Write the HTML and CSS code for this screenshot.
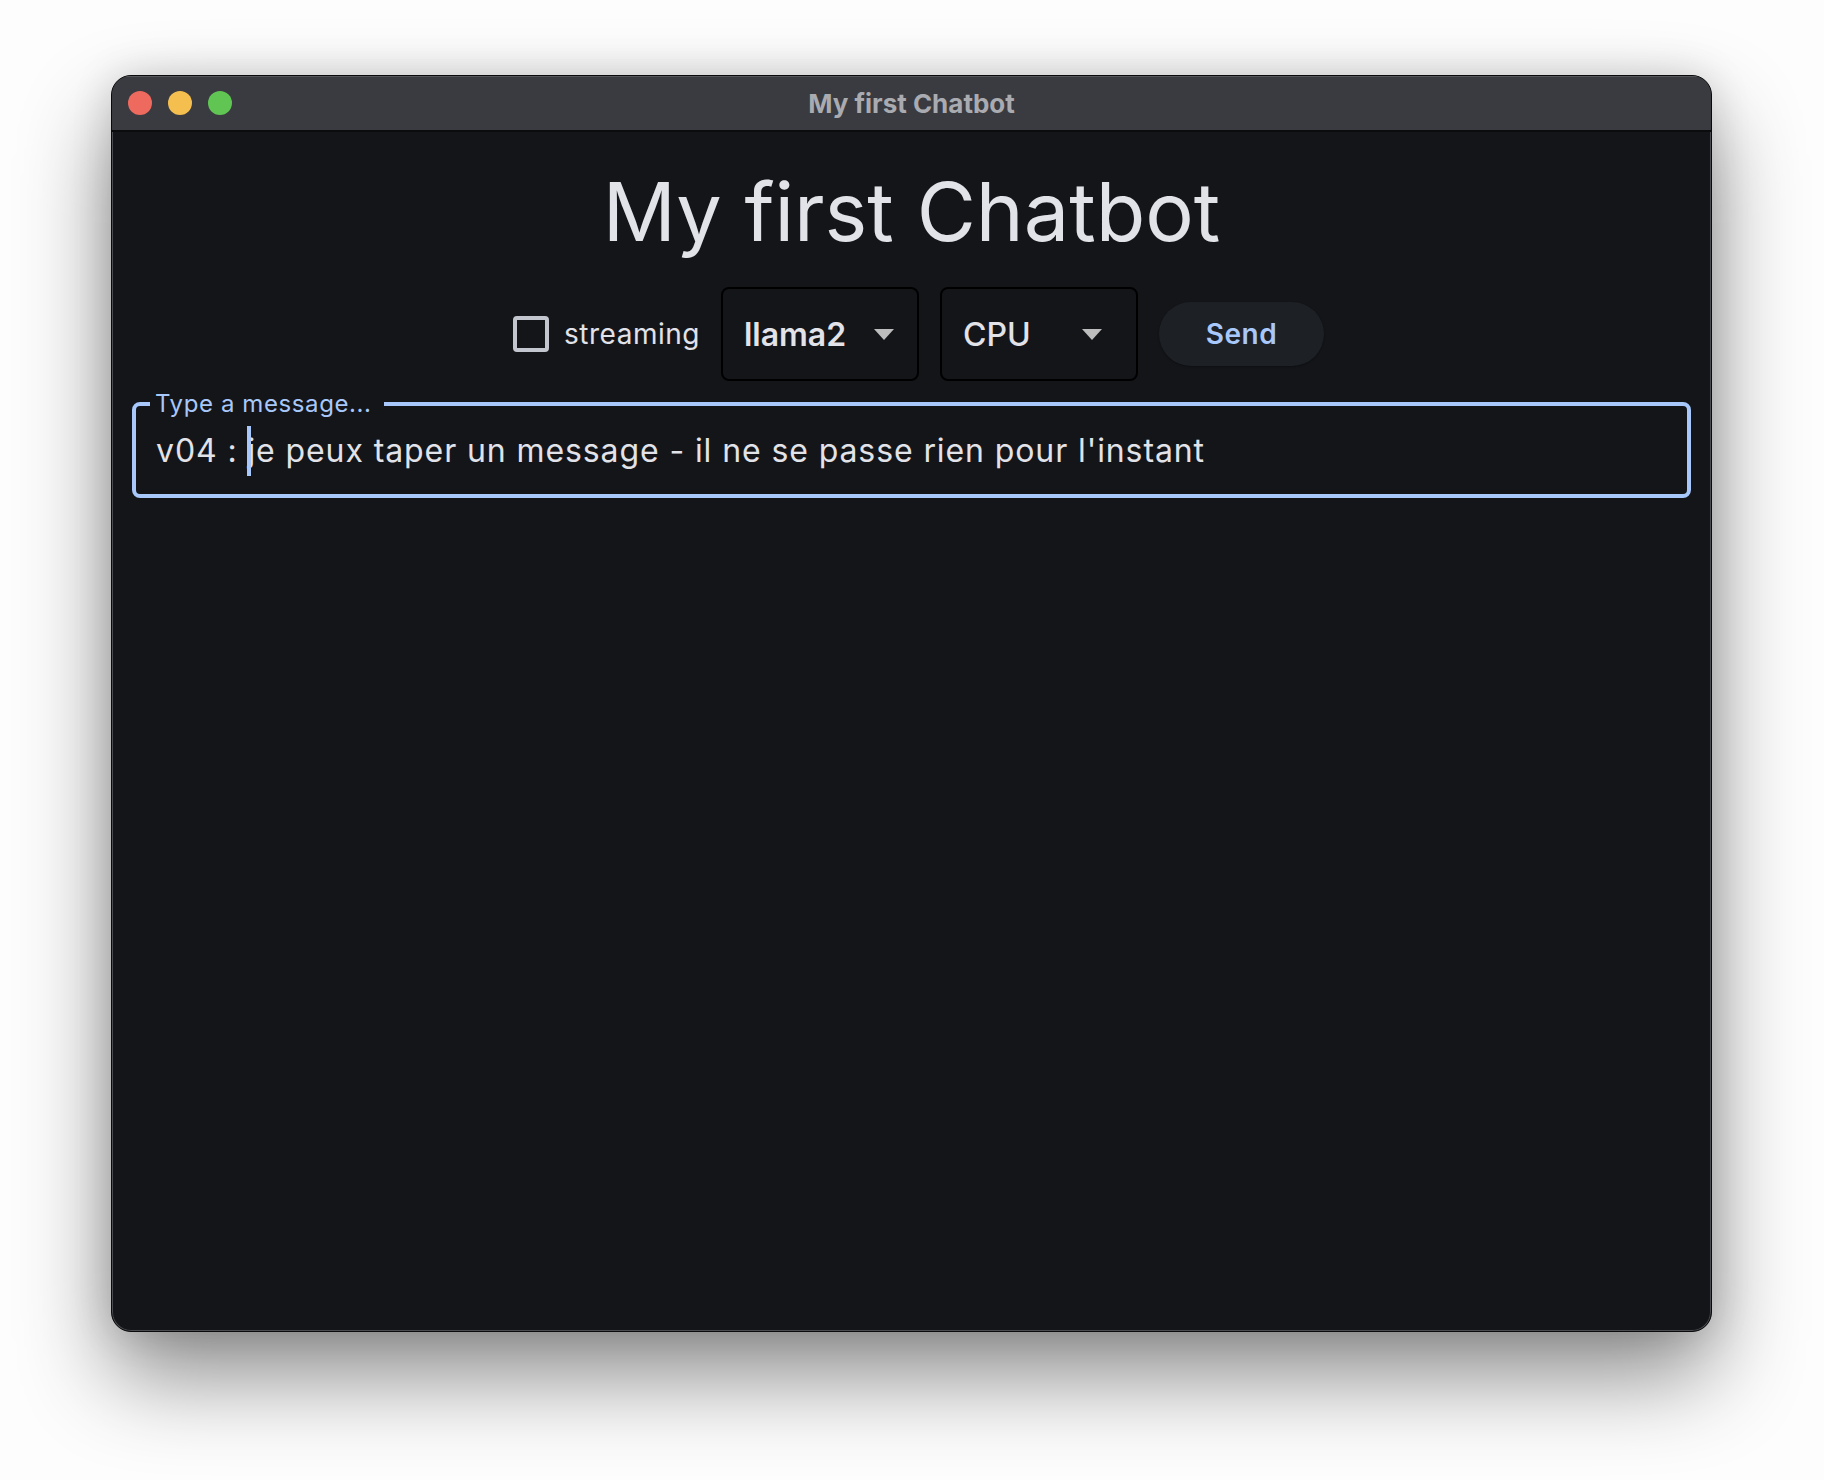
FILE: index.html
```html
<!DOCTYPE html>
<html lang="fr">
<head>
<meta charset="utf-8">
<title>My first Chatbot</title>
<link rel="stylesheet" href="styles.css">
</head>
<body>
<div class="desktop">
  <div class="window">
    <div class="titlebar">
      <div class="lights">
        <span class="light red"></span>
        <span class="light yellow"></span>
        <span class="light green"></span>
      </div>
      <div class="wintitle">My first Chatbot</div>
    </div>
    <div class="content">
      <h1 class="heading">My first Chatbot</h1>
      <div class="controls">
        <label class="check">
          <span class="box"></span>
          <span class="check-label">streaming</span>
        </label>
        <div class="dropdown">
          <span class="dd-text">llama2</span>
          <span class="arrow"></span>
        </div>
        <div class="dropdown dropdown-cpu">
          <span class="dd-text dd-regular">CPU</span>
          <span class="arrow"></span>
        </div>
        <button class="send">Send</button>
      </div>
      <fieldset class="field">
        <legend class="field-label">Type a message...</legend>
        <div class="field-text">v04 :&nbsp;<span class="caret"></span>je peux taper un message - il ne se passe rien pour l'instant</div>
      </fieldset>
    </div>
  </div>
</div>
</body>
</html>
```
FILE: styles.css
```css
* { box-sizing: border-box; }
html, body { margin: 0; padding: 0; }
body {
  width: 1824px;
  height: 1480px;
  background: #fdfdfd;
  font-family: "Inter", "Noto Sans", sans-serif;
  overflow: hidden;
}
.desktop {
  padding: 75px 0 0 111px;
}
.window {
  width: 1601px;
  height: 1257px;
  border-radius: 20px;
  background: #131519;
  border: 1px solid #0a0a0a;
  box-shadow: inset 0 0 0 1px #4a4c51, 0 44px 90px rgba(0,0,0,0.45), 0 0 40px rgba(0,0,0,0.14);
  overflow: hidden;
  display: flex;
  flex-direction: column;
}
.titlebar {
  height: 56px;
  flex: none;
  background: #393b40;
  border-bottom: 2px solid #0b0c0e;
  display: flex;
  align-items: center;
  position: relative;
  box-shadow: inset 0 1px 0 #55575c;
}
.lights {
  display: flex;
  gap: 16px;
  padding-left: 16px;
}
.light {
  width: 24px;
  height: 24px;
  border-radius: 50%;
  display: block;
}
.red { background: #ee6a5f; }
.yellow { background: #f5bf4f; }
.green { background: #61c554; }
.wintitle {
  position: absolute;
  left: 0; right: 0;
  text-align: center;
  font-size: 26px;
  font-weight: 700;
  color: #a9abb0;
  pointer-events: none;
}
.content {
  flex: 1;
  display: flex;
  flex-direction: column;
  padding: 0 20px;
}
.heading {
  margin: 32px 0 0;
  text-align: center;
  font-weight: 400;
  font-size: 81px;
  line-height: 96px;
  color: #e2e2e9;
  letter-spacing: 0;
}
.controls {
  display: flex;
  justify-content: center;
  align-items: center;
  gap: 21px;
  margin-top: 27px;
  padding-left: 14px;
}
.check {
  display: flex;
  align-items: center;
  gap: 15px;
}
.box {
  width: 36px;
  height: 36px;
  border: 4px solid #c4c6cf;
  border-radius: 4px;
  display: block;
}
.check-label {
  font-size: 28px;
  color: #e2e2e9;
  letter-spacing: 0.5px;
}
.dropdown {
  width: 198px;
  height: 94px;
  border: 2px solid #000;
  border-radius: 8px;
  display: flex;
  align-items: center;
  padding: 0 23px 0 21px;
}
.dd-text {
  font-size: 32px;
  font-weight: 600;
  color: #e2e2e9;
}
.dd-regular { font-weight: 500; }
.arrow {
  margin-left: auto;
  width: 0;
  height: 0;
  border-left: 10.5px solid transparent;
  border-right: 10.5px solid transparent;
  border-top: 11px solid #bdbdbd;
}
.dropdown-cpu { padding-right: 34px; }
.send {
  width: 165px;
  height: 64px;
  border: none;
  border-radius: 32px;
  background: #1d2025;
  color: #a8c7fa;
  font-family: "Inter", "Noto Sans", sans-serif;
  font-size: 28px;
  font-weight: 600;
  letter-spacing: 0.5px;
  box-shadow: 0 1px 2px rgba(0,0,0,0.3);
}
.field {
  margin: 9px 0 0;
  border: 4px solid #a8c7fa;
  border-radius: 8px;
  padding: 0 16px 16px 14px;
  min-width: 0;
}
.field-label {
  padding: 0 12px 0 5px;
  font-size: 24px;
  color: #a8c7fa;
  letter-spacing: 0.6px;
  line-height: 28px;
}
.field-text {
  font-size: 32px;
  color: #e2e2e9;
  letter-spacing: 0.9px;
  line-height: 48px;
  white-space: nowrap;
  padding: 9px 0 0 6px;
}
.caret {
  display: inline-block;
  width: 4px;
  height: 50px;
  margin-right: -4px;
  background: #a8c7fa;
  vertical-align: middle;
  position: relative;
  top: -2px;
}
```
